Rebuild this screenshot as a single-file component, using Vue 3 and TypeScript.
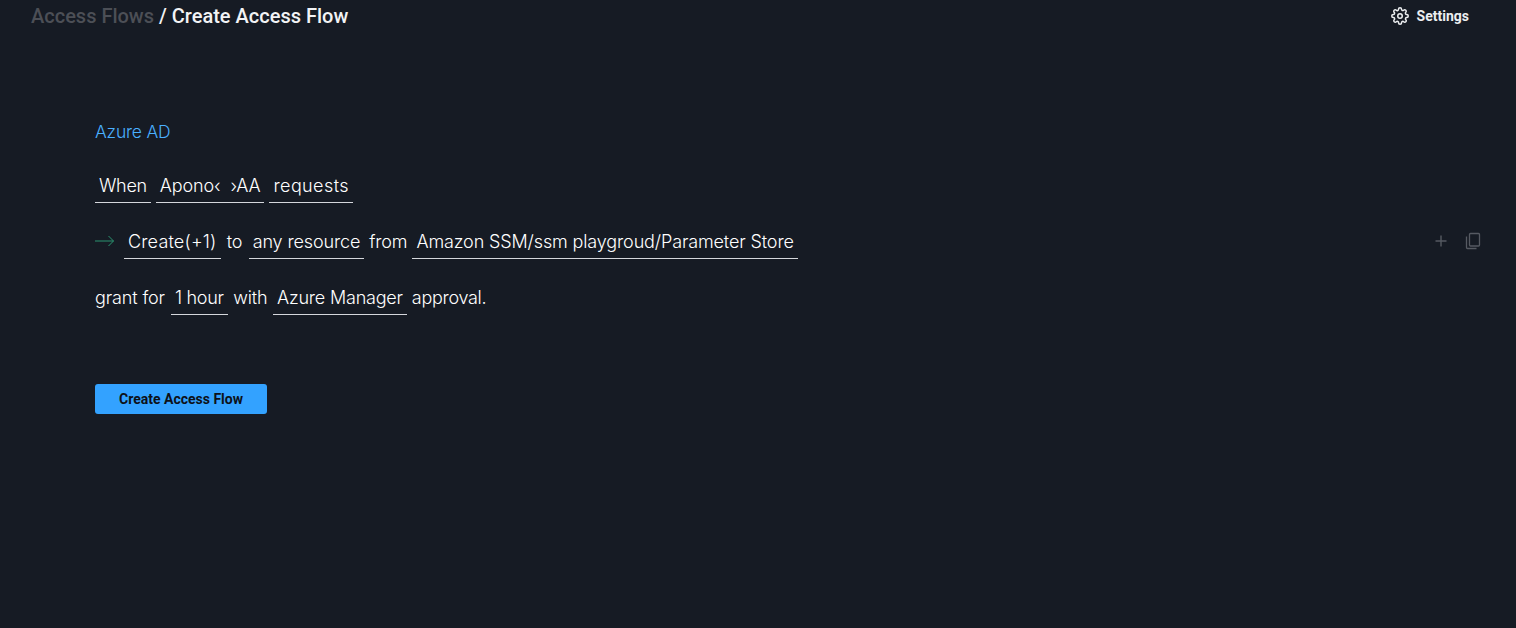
<script setup lang="ts">
interface Part { text: string; chip: boolean; tune?: string }
const row1: Part[] = [
  { text: 'When', chip: true, tune: 'tight' },
  { text: 'Apono‹ ›AA', chip: true, tune: 'wide' },
  { text: 'requests', chip: true, tune: 'airy' },
]
const row2: Part[] = [
  { text: 'Create(+1)', chip: true, tune: 'loose' },
  { text: 'to', chip: false, tune: 'pad' },
  { text: 'any resource', chip: true },
  { text: 'from', chip: false },
  { text: 'Amazon SSM/ssm playgroud/Parameter Store', chip: true },
]
const row3: Part[] = [
  { text: 'grant for', chip: false, tune: 'pad-end' },
  { text: '1 hour', chip: true, tune: 'tight' },
  { text: 'with', chip: false, tune: 'pad-half' },
  { text: 'Azure Manager', chip: true, tune: 'snug' },
  { text: 'approval.', chip: false, tune: 'tight' },
]
function partClass(p: Part): string[] {
  return [p.chip ? 'chip' : 'word', p.tune ?? '']
}
</script>

<template>
  <div class="page">
    <header class="topbar">
      <div class="crumbs">
        <span class="crumb-muted">Access Flows</span>
        <span class="crumb-current"> / Create Access Flow</span>
      </div>
      <div class="settings">
        <svg width="18" height="18" viewBox="0 0 24 24" fill="none" stroke="currentColor" stroke-width="2" stroke-linecap="round" stroke-linejoin="round">
          <circle cx="12" cy="12" r="3" />
          <path d="M19.4 15a1.65 1.65 0 0 0 .33 1.82l.06.06a2 2 0 1 1-2.83 2.83l-.06-.06a1.65 1.65 0 0 0-2.82 1.17V21a2 2 0 1 1-4 0v-.09A1.65 1.65 0 0 0 7.2 19.7l-.06.06a2 2 0 1 1-2.83-2.83l.06-.06a1.65 1.65 0 0 0-1.17-2.82H3a2 2 0 1 1 0-4h.09A1.65 1.65 0 0 0 4.3 7.2l-.06-.06a2 2 0 1 1 2.83-2.83l.06.06a1.65 1.65 0 0 0 1.82.33H9a1.65 1.65 0 0 0 1-1.51V3a2 2 0 1 1 4 0v.09a1.65 1.65 0 0 0 1 1.51 1.65 1.65 0 0 0 1.82-.33l.06-.06a2 2 0 1 1 2.83 2.83l-.06.06a1.65 1.65 0 0 0-.33 1.82V9a1.65 1.65 0 0 0 1.51 1H21a2 2 0 1 1 0 4h-.09a1.65 1.65 0 0 0-1.51 1z" />
        </svg>
        <span>Settings</span>
      </div>
    </header>

    <main class="content">
      <div class="flow-title">Azure AD</div>

      <div class="sentence first">
        <span v-for="p in row1" :key="p.text" :class="partClass(p)">{{ p.text }}</span>
      </div>

      <div class="sentence with-actions">
        <svg class="arrow" width="20" height="12" viewBox="0 0 20 12" fill="none" stroke="#2a9470" stroke-width="1">
          <path d="M0 6h18.5M13.5 1l5 5-5 5" />
        </svg>
        <span v-for="p in row2" :key="p.text" :class="partClass(p)">{{ p.text }}</span>
        <div class="actions">
          <svg width="14" height="14" viewBox="0 0 14 14" fill="none" stroke="#565a62" stroke-width="1.4">
            <path d="M7 1.5v11M1.5 7h11" />
          </svg>
          <svg width="18" height="18" viewBox="0 0 18 18" fill="none" stroke="#565a62" stroke-width="1.3">
            <rect x="5.5" y="1.5" width="10" height="12.5" rx="1" />
            <path d="M2.5 4.5v11a1 1 0 0 0 1 1h9" />
          </svg>
        </div>
      </div>

      <div class="sentence">
        <span v-for="p in row3" :key="p.text" :class="partClass(p)">{{ p.text }}</span>
      </div>

      <button class="primary" type="button">Create Access Flow</button>
    </main>
  </div>
</template>

<style scoped>
.page {
  width: 1516px;
  height: 628px;
  overflow: hidden;
  background: #161b24;
  color: #f2f3f5;
  font-family: Inter, "Noto Sans", sans-serif;
}
.topbar {
  height: 32px;
  padding: 0 47px 0 31px;
  display: flex;
  align-items: center;
  justify-content: space-between;
}
.crumbs {
  font-family: Roboto, sans-serif;
  font-weight: 500;
  font-size: 20px;
  white-space: pre;
}
.crumb-muted { color: #4c4f56; }
.crumb-current { color: #f2f3f5; }
.settings {
  display: flex;
  align-items: center;
  gap: 8px;
  font-family: Roboto, sans-serif;
  font-weight: 700;
  font-size: 14px;
  color: #eceef0;
}
.content {
  padding: 88px 34px 0 95px;
}
.flow-title {
  height: 24px;
  line-height: 24px;
  font-size: 17.5px;
  font-weight: 300;
  letter-spacing: -0.2px;
  color: #4ab0ff;
}
.sentence {
  height: 36px;
  margin-top: 20px;
  display: flex;
  align-items: flex-end;
  gap: 5px;
  font-size: 18px;
  font-weight: 300;
  letter-spacing: -0.13px;
  color: #ffffff;
  white-space: nowrap;
}
.sentence.first {
  margin-top: 23px;
}
.chip {
  height: 35px;
  line-height: 36px;
  padding: 0 4px;
  border-bottom: 1px solid #d5d7dc;
  box-sizing: border-box;
}
.word {
  height: 35px;
  line-height: 36px;
}
.wide {
  word-spacing: 5px;
}
.loose {
  letter-spacing: 0.17px;
}
.airy {
  letter-spacing: 0.4px;
}
.tight {
  letter-spacing: -0.3px;
}
.snug {
  letter-spacing: -0.2px;
}
.pad {
  padding: 0 1.25px;
}
.pad-half {
  padding: 0 0.5px;
}
.pad-end {
  padding-right: 1px;
}
.with-actions .arrow {
  align-self: center;
  margin: 0 4px 0 0;
  flex: none;
}
.actions {
  margin-left: auto;
  height: 35px;
  display: flex;
  align-items: center;
  gap: 16px;
  padding-bottom: 1px;
  box-sizing: border-box;
}
.primary {
  display: block;
  margin-top: 69px;
  width: 172px;
  height: 30px;
  border: none;
  border-radius: 3px;
  background: #33a2ff;
  color: #0d1118;
  font-family: Roboto, sans-serif;
  font-weight: 700;
  font-size: 14px;
  padding: 0;
}
</style>
